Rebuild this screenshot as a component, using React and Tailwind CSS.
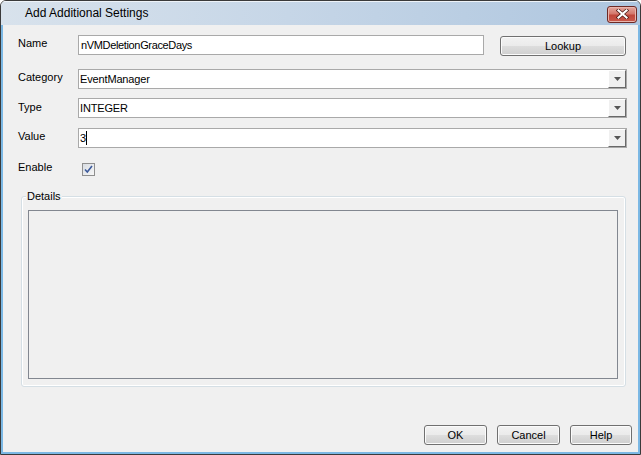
import React from "react";

const font = { fontFamily: '"Liberation Sans", Arial, sans-serif' };

const WinButton = ({ children, className = "" }) => (
  <button
    className={`flex items-center justify-center h-[20px] rounded-[3px] border border-[#707070] bg-[linear-gradient(#f2f2f2_0%,#ebebeb_48%,#dddddd_52%,#cfcfcf_100%)] text-[11px] text-black shadow-[inset_0_0_0_1px_#fbfbfb] ${className}`}
  >
    {children}
  </button>
);

const Combo = ({ children }) => (
  <div className="flex items-center h-[20px] w-[549px] border border-[#a9a9a9] bg-white">
    <div className="flex-1 flex items-center pl-[1px] text-[11px] tracking-[-0.15px] text-black">{children}</div>
    <div className="flex items-center justify-center w-[18px] h-[18px] bg-[#f0f0f0] border-t border-l border-t-white border-l-white border-b border-r border-b-[#696969] border-r-[#696969]">
      <svg width="7" height="4" viewBox="0 0 7 4">
        <path d="M0 0H7L3.5 4Z" fill="#555" />
      </svg>
    </div>
  </div>
);

const Label = ({ children, className = "" }) => (
  <div className={`w-[60px] text-[11px] text-black ${className}`}>{children}</div>
);

export default function App() {
  return (
    <div
      style={font}
      className="w-[641px] h-[455px] border border-[#3a3a3a] rounded-t-[6px] overflow-hidden flex flex-col bg-[#f0f0f0]"
    >
      {/* title bar */}
      <div className="h-[24px] shrink-0 flex items-center justify-between pl-[24px] pr-[3px] bg-[linear-gradient(90deg,#d8e2ec_0%,#c6d6e7_45%,#aec6df_100%)] shadow-[inset_0_1px_0_#eef3f8]">
        <span className="text-[12px] text-black">Add Additional Settings</span>
        <div className="w-[30px] h-[17px] mt-[2px] rounded-[3px] border border-[#6e2a25] bg-[linear-gradient(#e3a79d_0%,#d4786c_45%,#c0473b_55%,#c9594b_100%)] flex items-center justify-center shadow-[inset_0_0_0_1px_#e9b5ad]">
          <svg width="13" height="10" viewBox="0 0 13 10">
            <path d="M2.5 1.5L10.5 8.5M10.5 1.5L2.5 8.5" stroke="#4a1a16" strokeWidth="3.6" strokeLinecap="square" />
            <path d="M2.5 1.5L10.5 8.5M10.5 1.5L2.5 8.5" stroke="#ffffff" strokeWidth="2.2" strokeLinecap="square" />
          </svg>
        </div>
      </div>

      {/* body */}
      <div className="flex-1 flex flex-col border-l-2 border-r-2 border-b-2 border-[#7cb8e4] pl-[15px] pt-[10px]">
        <div className="flex items-start">
          <Label className="pt-0">Name</Label>
          <div className="flex items-center w-[406px] h-[20px] border border-[#a9a9a9] bg-white pl-[2px] text-[11px] tracking-[-0.35px] text-black">
            nVMDeletionGraceDays
          </div>
          <WinButton className="ml-[16px] mt-[1px] w-[126px]">Lookup</WinButton>
        </div>

        <div className="flex items-start mt-[13px]">
          <Label className="pt-0">Category</Label>
          <Combo>EventManager</Combo>
        </div>
        <div className="flex items-start mt-[9px]">
          <Label className="pt-[1px]">Type</Label>
          <Combo>INTEGER</Combo>
        </div>
        <div className="flex items-start mt-[10px]">
          <Label className="pt-0">Value</Label>
          <Combo>
            <span>3</span>
            <span className="inline-block w-px h-[14px] bg-black" />
          </Combo>
        </div>

        <div className="flex items-start mt-[15px]">
          <Label className="-mt-[4px]">Enable</Label>
          <div className="ml-[4px] w-[13px] h-[13px] border border-[#8f8f8f] bg-[linear-gradient(135deg,#d8dce2,#f7f7f7)] flex items-center justify-center">
            <svg width="9" height="9" viewBox="0 0 9 9">
              <path d="M1 4.5L3.3 7L8 1" fill="none" stroke="#3d5b9c" strokeWidth="1.6" />
            </svg>
          </div>
        </div>

        <div className="relative ml-[3px] mt-[20px] w-[605px] h-[191px] rounded-[3px] border border-[#d5dfe5] shadow-[inset_0_0_0_1px_#ffffff] pt-[13px] pl-[6px]">
          <span className="absolute left-[4px] -top-[7px] px-[1px] bg-[#f0f0f0] text-[11px] text-black leading-[13px]">
            Details
          </span>
          <div className="w-[590px] h-[169px] border border-[#828790] bg-[#f0f0f0]" />
        </div>

        <div className="flex justify-end gap-[10px] mt-auto mb-[7px] mr-[6px]">
          <WinButton className="w-[63px]">OK</WinButton>
          <WinButton className="w-[63px]">Cancel</WinButton>
          <WinButton className="w-[62px]">Help</WinButton>
        </div>
      </div>
    </div>
  );
}
